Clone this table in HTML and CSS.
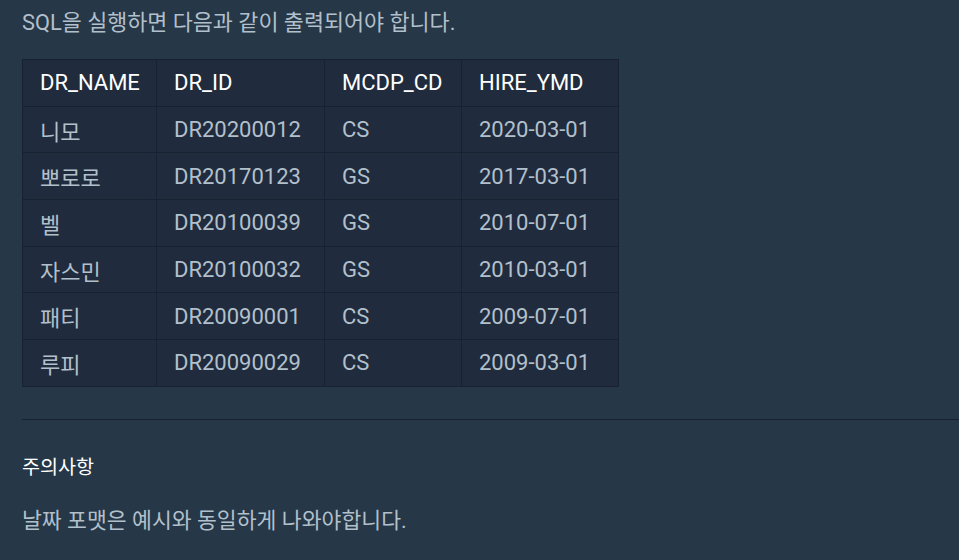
FILE: index.html
```html
<!DOCTYPE html>
<html lang="ko">
<head>
<meta charset="utf-8">
<link rel="stylesheet" href="styles.css">
</head>
<body>
<div class="markdown">
  <p class="lead">SQL을 실행하면 다음과 같이 출력되어야 합니다.</p>
  <table class="result">
    <thead>
      <tr><th>DR_NAME</th><th>DR_ID</th><th>MCDP_CD</th><th>HIRE_YMD</th></tr>
    </thead>
    <tbody>
      <tr><td>니모</td><td>DR20200012</td><td>CS</td><td>2020-03-01</td></tr>
      <tr><td>뽀로로</td><td>DR20170123</td><td>GS</td><td>2017-03-01</td></tr>
      <tr><td>벨</td><td>DR20100039</td><td>GS</td><td>2010-07-01</td></tr>
      <tr><td>자스민</td><td>DR20100032</td><td>GS</td><td>2010-03-01</td></tr>
      <tr><td>패티</td><td>DR20090001</td><td>CS</td><td>2009-07-01</td></tr>
      <tr><td>루피</td><td>DR20090029</td><td>CS</td><td>2009-03-01</td></tr>
    </tbody>
  </table>
  <hr class="divider">
  <h5 class="note-title">주의사항</h5>
  <p class="note">날짜 포맷은 예시와 동일하게 나와야합니다.</p>
</div>
</body>
</html>
```
FILE: styles.css
```css
html, body {
  margin: 0;
  padding: 0;
  background: #263747;
  overflow: hidden;
}
body {
  font-family: Roboto, "Noto Sans CJK KR", sans-serif;
  color: #b2c0cc;
}
.markdown {
  padding-left: 22px;
}
.lead {
  margin: 0;
  padding-top: 8px;
  font-size: 21.8px;
  line-height: 30px;
}
.result {
  margin-top: 21px;
  border-collapse: collapse;
  background: #202b3d;
  font-size: 22px;
}
.result th,
.result td {
  border: 1px solid #172130;
  padding: 0 16px 0 17px;
  height: 45.7px;
  text-align: left;
  font-weight: 400;
  white-space: nowrap;
}
.result th:first-child,
.result td:first-child {
  padding-right: 15px;
}
.result th {
  color: #ffffff;
}
.result th:nth-child(1) { width: 101px; }
.result th:nth-child(2) { width: 134px; }
.result th:nth-child(3) { width: 103px; }
.result th:nth-child(4) { width: 123px; }
.divider {
  margin: 32px 0 0;
  border: 0;
  border-top: 1px solid #172130;
}
.note-title {
  margin: 36px 0 0;
  font-size: 19.6px;
  font-weight: 400;
  color: #ffffff;
  line-height: 24px;
}
.note {
  margin: 26px 0 0;
  font-size: 21.6px;
  line-height: 30px;
}
```
